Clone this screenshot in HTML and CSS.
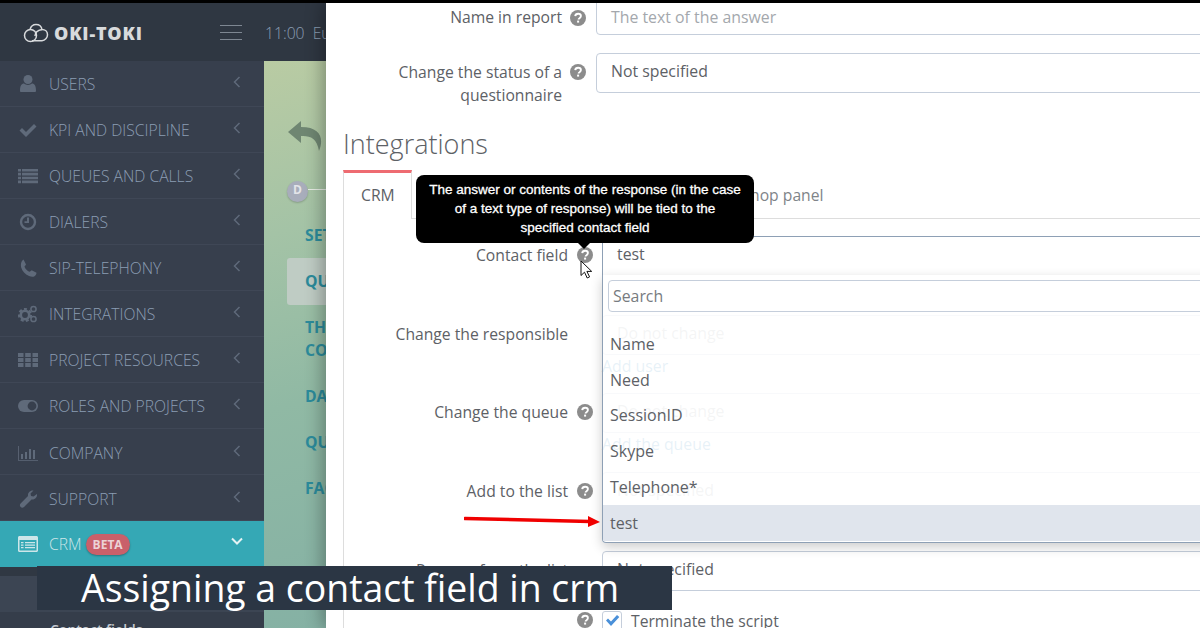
FILE: index.html
```html
<!DOCTYPE html>
<html lang="en">
<head>
    <meta charset="UTF-8">
    <title>Oki-Toki</title>
    <link rel="stylesheet" href="styles.css">
</head>
<body>
    <svg class="defs" width="0" height="0">
        <symbol id="help" viewBox="0 0 16 16">
            <circle cx="8" cy="8" r="8" fill="#8c8c8c"/>
            <path d="M5.200 6.200c.2-1.600 1.400-2.400 2.900-2.400 1.600 0 2.800.9 2.800 2.300 0 1.100-.7 1.600-1.400 2.100-.6.4-.9.700-.9 1.300" fill="none" stroke="#fff" stroke-width="1.900"/>
            <rect x="7.100" y="10.600" width="2" height="2" fill="#fff"/>
        </symbol>
    </svg>

    <aside class="sidebar">
        <div class="logo">
            <svg class="logo-icon" width="26" height="20" viewBox="0 0 26 20" fill="none" stroke="#d8dadc" stroke-width="1.500">
                <circle cx="7.500" cy="12.500" r="6"/>
                <path d="M7 6.500C8 3 10.500 1.500 13 1.500c3 0 5.500 2 6 5 3 0 5.500 2 5.500 5.200 0 3-2.500 6-5.500 6H9"/>
                <path d="M12 13c0-3 2-5.500 7-6.500"/>
            </svg>
            <span class="logo-text">OKI-TOKI</span>
            <svg class="burger" width="22" height="16" viewBox="0 0 22 16"><path d="M0 .5h22M0 7.500h22M0 14.500h22" stroke="#7e8792"/></svg>
        </div>
        <ul class="menu">
            <li class="menu-item">
                <svg class="menu-icon" viewBox="0 0 20 20"><circle cx="10" cy="5.500" r="4.500"/><path d="M3 18c-.8 0-1-.6-1-1.500C2 12 3.500 9.500 6 9.500c1 .9 2.400 1.400 4 1.400s3-.5 4-1.400c2.500 0 4 2.500 4 7 0 .9-.2 1.500-1 1.500z"/></svg>
                <span class="menu-label">USERS</span>
                <svg class="chevron" viewBox="0 0 8 12"><path d="M6.500 1 1.500 6l5 5"/></svg>
            </li>
            <li class="menu-item">
                <svg class="menu-icon" viewBox="0 0 20 20"><path d="M1.500 10.500 4 8l4 4 8-8 2.500 2.500L8 17z"/></svg>
                <span class="menu-label">KPI AND DISCIPLINE</span>
                <svg class="chevron" viewBox="0 0 8 12"><path d="M6.500 1 1.500 6l5 5"/></svg>
            </li>
            <li class="menu-item">
                <svg class="menu-icon" viewBox="0 0 20 20"><path d="M0 3h3v2.500H0zM4 3h16v2.500H4zM0 6.800h3v2.600H0zM4 6.800h16v2.600H4zM0 10.700h3v2.600H0zM4 10.700h16v2.600H4zM0 14.600h3v2.600H0zM4 14.600h16v2.600H4z"/></svg>
                <span class="menu-label">QUEUES AND CALLS</span>
                <svg class="chevron" viewBox="0 0 8 12"><path d="M6.500 1 1.500 6l5 5"/></svg>
            </li>
            <li class="menu-item">
                <svg class="menu-icon" viewBox="0 0 20 20"><circle cx="10" cy="10" r="7" fill="none" stroke="#5f6a7a" stroke-width="2.400"/><path d="M9 5.500h2V11H6.500V9.300H9z"/></svg>
                <span class="menu-label">DIALERS</span>
                <svg class="chevron" viewBox="0 0 8 12"><path d="M6.500 1 1.500 6l5 5"/></svg>
            </li>
            <li class="menu-item">
                <svg class="menu-icon" viewBox="0 0 20 20"><path d="M5.500 1.500 8 6.500c-.5 1-1.500 1.400-1.500 2.300 1 2.500 2.700 4 5 5 1-.2 1.300-1.200 2.200-1.600l4.800 2.500c0 1.500-.8 2.800-2 3.500-1.500.8-3.500.6-5.500-.3-4-1.700-6.600-4.700-7.800-8.400C2.600 6.500 3 3 5.500 1.500z"/></svg>
                <span class="menu-label">SIP-TELEPHONY</span>
                <svg class="chevron" viewBox="0 0 8 12"><path d="M6.500 1 1.500 6l5 5"/></svg>
            </li>
            <li class="menu-item">
                <svg class="menu-icon" viewBox="0 0 20 20">
                    <circle cx="7" cy="11" r="4.200" fill="none" stroke="#5f6a7a" stroke-width="2.600"/>
                    <circle cx="7" cy="11" r="6" fill="none" stroke="#5f6a7a" stroke-width="2.200" stroke-dasharray="3 2.300"/>
                    <circle cx="15.500" cy="5" r="2.600" fill="none" stroke="#5f6a7a" stroke-width="1.500"/>
                    <circle cx="15.500" cy="15" r="2.600" fill="none" stroke="#5f6a7a" stroke-width="1.500"/>
                </svg>
                <span class="menu-label">INTEGRATIONS</span>
                <svg class="chevron" viewBox="0 0 8 12"><path d="M6.500 1 1.500 6l5 5"/></svg>
            </li>
            <li class="menu-item">
                <svg class="menu-icon" viewBox="0 0 20 20"><path d="M0 3h5.500v4H0zM7.200 3h5.600v4H7.200zM14.500 3H20v4h-5.500zM0 8h5.500v4H0zM7.200 8h5.600v4H7.200zM14.500 8H20v4h-5.500zM0 13h5.500v4H0zM7.200 13h5.600v4H7.200zM14.500 13H20v4h-5.500z"/></svg>
                <span class="menu-label">PROJECT RESOURCES</span>
                <svg class="chevron" viewBox="0 0 8 12"><path d="M6.500 1 1.500 6l5 5"/></svg>
            </li>
            <li class="menu-item">
                <svg class="menu-icon" viewBox="0 0 20 20"><rect x="0" y="4" width="20" height="12" rx="6"/><circle cx="14" cy="10" r="4.400" fill="#373f4d"/></svg>
                <span class="menu-label">ROLES AND PROJECTS</span>
                <svg class="chevron" viewBox="0 0 8 12"><path d="M6.500 1 1.500 6l5 5"/></svg>
            </li>
            <li class="menu-item low">
                <svg class="menu-icon" viewBox="0 0 20 20"><path d="M0 3h.8v14H20v.8H0zM3 11h2v5H3zM7 9h2v7H7zM11 6h2v10h-2zM15 7h2v9h-2z"/></svg>
                <span class="menu-label">COMPANY</span>
                <svg class="chevron" viewBox="0 0 8 12"><path d="M6.500 1 1.500 6l5 5"/></svg>
            </li>
            <li class="menu-item low">
                <svg class="menu-icon" viewBox="0 0 20 20"><path d="M19 5c.5 3-2 6-5.500 5.500L6 18c-1 1-2.500 1-3.400 0-1-1-1-2.400 0-3.400L10 7c-.5-3.500 2.500-6 5.500-5.500l-3 3 .5 2.500 2.500.5z"/></svg>
                <span class="menu-label">SUPPORT</span>
                <svg class="chevron" viewBox="0 0 8 12"><path d="M6.500 1 1.500 6l5 5"/></svg>
            </li>
            <li class="menu-item active">
                <svg class="menu-icon" viewBox="0 0 20 20"><path fill-rule="evenodd" d="M1.500 2h17c.8 0 1.500.7 1.500 1.500v13c0 .8-.7 1.500-1.500 1.500h-17C.7 18 0 17.300 0 16.500v-13C0 2.700.7 2 1.500 2zM1.500 6v10.500h17V6zM3 8h2.500v1.300H3zM7 8h10v1.300H7zM3 10.500h2.500v1.300H3zM7 10.500h10v1.300H7zM3 13h2.500v1.300H3zM7 13h10v1.300H7z"/></svg>
                <span class="menu-label">CRM</span>
                <span class="badge">BETA</span>
                <svg class="chevron down" viewBox="0 0 12 8"><path d="M1 1.500 6 6.500l5-5"/></svg>
            </li>
        </ul>
        <div class="submenu">
            <div class="submenu-current"></div>
            <div class="submenu-item">Contact fields</div>
        </div>
    </aside>

    <main class="content">
        <header class="topbar">
            <span class="clock">11:00 &nbsp;Europe</span>
        </header>
        <div class="page">
            <svg class="back" width="36" height="32" viewBox="0 0 36 32"><path d="M14 1 1 12l13 11v-7c9-.5 16 2 18 15 5-12 2-24-18-24z" fill="#6f8672"/></svg>
            <div class="steps">
                <span class="step">D</span>
                <span class="step-line"></span>
            </div>
            <div class="side-title">SETTINGS</div>
            <div class="side-btn">QUESTIONS</div>
            <div class="side-title tall">THE CONTACT<br>CONTACT</div>
            <div class="side-title">DATA</div>
            <div class="side-title">QUEUES</div>
            <div class="side-title">FAQ</div>
        </div>
    </main>

    <section class="modal">
        <div class="row top-row first">
            <label class="row-label">Name in report</label>
            <svg class="help"><use href="#help"/></svg>
            <div class="field placeholder">The text of the answer</div>
        </div>
        <div class="row top-row">
            <label class="row-label">Change the status of a questionnaire</label>
            <svg class="help"><use href="#help"/></svg>
            <div class="field">Not specified</div>
        </div>

        <h2 class="section-title">Integrations</h2>

        <div class="tabs">
            <div class="tab active">CRM</div>
            <div class="tab spacer"></div>
            <div class="tab">Workshop panel</div>
        </div>

        <div class="pane">
            <div class="row pane-row contact">
                <label class="row-label">Contact field</label>
                <svg class="help"><use href="#help"/></svg>
                <div class="field open">test</div>

                <div class="tooltip">The answer or contents of the response (in the case of a text type of response) will be tied to the specified contact field</div>
                <svg class="cursor" width="15" height="19" viewBox="0 0 15 19"><path d="M1 1v14.500l3.500-3.300 2.700 5.800 2.400-1.100-2.700-5.500h4.800z" fill="#fff" stroke="#111" stroke-width="1"/></svg>

                <div class="dropdown">
                    <input class="search" type="text" placeholder="Search">
                    <ul class="options">
                        <li class="option clipped">Company</li>
                        <li class="option">Name</li>
                        <li class="option">Need</li>
                        <li class="option">SessionID</li>
                        <li class="option">Skype</li>
                        <li class="option">Telephone*</li>
                        <li class="option selected">test</li>
                    </ul>
                </div>
            </div>
            <div class="row pane-row">
                <label class="row-label">Change the responsible</label>
                <span></span>
                <div class="field placeholder">Do not change</div>
                <a class="add-link">Add user</a>
            </div>
            <div class="row pane-row">
                <label class="row-label">Change the queue</label>
                <svg class="help"><use href="#help"/></svg>
                <div class="field placeholder">Do not change</div>
                <a class="add-link">Add the queue</a>
            </div>
            <div class="row pane-row">
                <label class="row-label">Add to the list</label>
                <svg class="help"><use href="#help"/></svg>
                <div class="field placeholder">Not specified</div>
            </div>
            <div class="row pane-row short">
                <label class="row-label">Remove from the list</label>
                <span></span>
                <div class="field">Not specified</div>
            </div>
            <div class="row pane-row check">
                <span></span>
                <svg class="help"><use href="#help"/></svg>
                <div class="check-row">
                    <span class="checkbox">
                        <svg width="15" height="13" viewBox="0 0 15 13"><path d="M1 6.500 3 4.500l3 3L12 1l2.300 2L6 12z" fill="#4a90d9"/></svg>
                    </span>
                    Terminate the script
                </div>
            </div>
        </div>
    </section>

    <svg class="red-arrow" width="140" height="14" viewBox="0 0 140 14">
        <path d="M1 3.500 126 6.500" stroke="#f00000" stroke-width="3.500" stroke-linecap="round"/>
        <path d="M124 1l12 6-12 5z" fill="#f00000"/>
    </svg>

    <div class="caption">Assigning a contact field in crm</div>
</body>
</html>
```

FILE: styles.css
```css
* {
    box-sizing: border-box;
}
html, body {
    margin: 0;
    height: 628px;
    overflow: hidden;
}
body {
    display: flex;
    position: relative;
    padding-top: 3px;
    background: #000;
    font-family: "Open Sans", sans-serif;
    font-size: 15.7px;
    color: #5d6166;
}
.defs {
    position: absolute;
}

/* sidebar */
.sidebar {
    flex: none;
    width: 264px;
    background: #373f4d;
}
.logo {
    display: flex;
    align-items: center;
    height: 58px;
    padding: 2px 22px 0 23px;
    background: #2f3742;
}
.logo-icon {
    margin-right: 5px;
}
.logo-text {
    font-weight: 800;
    font-size: 18px;
    letter-spacing: 0.8px;
    color: #d8dadc;
}
.burger {
    margin-left: auto;
}
.menu {
    list-style: none;
    margin: 0;
    padding: 0;
}
.menu-item {
    display: flex;
    align-items: center;
    height: 46px;
    padding-left: 18px;
    border-bottom: 1px solid #3f4756;
    font-weight: 300;
    color: #8b9db3;
}
.menu-item.low {
    padding-top: 2px;
}
.menu-icon {
    flex: none;
    width: 20px;
    height: 20px;
    margin-right: 11px;
    fill: #5f6a7a;
}
.chevron {
    width: 8px;
    height: 12px;
    margin-left: auto;
    margin-right: 23px;
    margin-top: -3px;
    fill: none;
    stroke: #5f6a7a;
    stroke-width: 1.5;
}
.menu-item.active {
    border-bottom: 0;
    background: #35a8b5;
    color: #cfe6e8;
}
.active .menu-icon {
    fill: #cde6e9;
}
.chevron.down {
    width: 12px;
    height: 8px;
    margin-right: 21px;
    margin-top: -6px;
    stroke: #e4f2f3;
    stroke-width: 2;
}
.badge {
    margin-left: 4px;
    padding: 0 7px;
    height: 21px;
    line-height: 22px;
    border-radius: 11px;
    background: #c9606a;
    box-shadow: 0 1px 2px rgba(0, 0, 0, 0.3);
    font-size: 12px;
    font-weight: 700;
    color: #ecd3d6;
}
.submenu {
    padding-top: 9px;
    background: #303843;
}
.submenu-current {
    height: 36px;
    background: #3c4553;
}
.submenu-item {
    padding: 8px 0 0 50px;
    height: 20px;
    background: #353d4a;
    font-size: 14px;
    font-weight: 600;
    color: #c4c9d0;
}

/* page behind the modal */
.content {
    flex: none;
    width: 62px;
    overflow: hidden;
}
.topbar {
    display: flex;
    width: 200px;
    height: 58px;
    align-items: center;
    padding: 2px 0 0 1px;
    background: #2f3742;
    white-space: nowrap;
}
.clock {
    color: #8b9db3;
    font-weight: 300;
}
.page {
    height: 567px;
    padding: 59px 0 0 23px;
    background: linear-gradient(165deg, #b9cba3 0%, #a4c3a6 30%, #90b9a4 60%, #85b1a4 100%);
    white-space: nowrap;
}
.back {
    display: block;
}
.steps {
    display: flex;
    align-items: center;
    margin-top: 29px;
}
.step {
    flex: none;
    width: 21px;
    height: 21px;
    line-height: 17px;
    border-radius: 50%;
    background: #a8adbb;
    box-shadow: 0 1px 2px rgba(0, 0, 0, 0.2);
    text-align: center;
    font-size: 12px;
    font-weight: 700;
    color: #e3e4e8;
}
.step-line {
    flex: none;
    width: 40px;
    height: 1px;
    margin-top: -4px;
    background: #e6ece4;
}
.side-title {
    margin: 22px 0 0 18px;
    font-weight: 700;
    line-height: 23px;
    color: #2c8b9b;
}
.side-title.tall {
    margin-top: 11px;
}
.side-btn {
    width: 200px;
    height: 47px;
    margin-top: 11px;
    padding: 12px 0 0 18px;
    border-radius: 3px;
    background: #bfccc4;
    font-weight: 700;
    color: #2c8b9b;
}
.side-title + .side-title:not(.tall) {
    margin-top: 23px;
}

/* modal */
.modal {
    flex: none;
    width: 920px;
    height: 625px;
    overflow: hidden;
    padding-left: 17px;
    background: #fff;
    box-shadow: -4px 0 16px rgba(0, 0, 0, 0.3);
    z-index: 2;
}
.row {
    display: grid;
    position: relative;
    align-content: start;
}
.top-row {
    grid-template-columns: 219px 34px 1fr;
    margin-top: 18px;
}
.top-row.first {
    margin-top: -8px;
}
.first .row-label {
    padding-top: 11px;
}
.first .field {
    padding-top: 10px;
}
.first .help {
    margin-top: 15px;
}
.row-label {
    padding-top: 8px;
    text-align: right;
    line-height: 23px;
}
.help {
    width: 16px;
    height: 16px;
    margin: 11px 0 0 8px;
}
.pane-row .help {
    margin-left: 9px;
}
.field {
    height: 40px;
    padding: 6px 14px;
    border: 1px solid #c5cedb;
    border-radius: 4px;
    line-height: 23px;
    font-size: 15.85px;
    background: #fff;
}
.placeholder {
    color: #a4a8ad;
}
.section-title {
    margin: 17px 0 6px;
    font-size: 27px;
    font-weight: 300;
    line-height: 40px;
    color: #5d6166;
}

/* tabs */
.tabs {
    display: flex;
    height: 49px;
    border-bottom: 1px solid #ddd;
}
.tab {
    padding: 14px 0 0 18px;
    line-height: 23px;
    color: #808489;
}
.tab.active {
    width: 69px;
    height: 49px;
    border: 1px solid #ddd;
    border-top: 3px solid #ee6b71;
    border-bottom: 0;
    background: #fff;
    color: #5d6166;
    padding-top: 11px;
    padding-left: 17px;
}
.tab.spacer {
    width: 274px;
}

/* tab pane */
.pane {
    padding-top: 17px;
    border-left: 1px solid #ddd;
}
.pane-row {
    grid-template-columns: 224px 34px 1fr;
    height: 78.67px;
}
.pane-row.short {
    height: 60px;
}
.add-link {
    grid-column: 3;
    line-height: 23px;
    font-size: 15.85px;
    color: #3c8dbc;
}
.field.open {
    border-color: #8ea0b5;
    border-radius: 4px 4px 0 0;
    border-bottom: 0;
}
.check .help {
    margin-top: 1px;
}
.check-row {
    display: flex;
    align-items: center;
    gap: 9px;
    height: 20px;
    white-space: nowrap;
}
.checkbox {
    display: flex;
    align-items: center;
    justify-content: center;
    width: 20px;
    height: 20px;
    border: 1px solid #c5cedb;
    border-radius: 3px;
}

/* things lying over the form */
.dropdown {
    position: absolute;
    left: 258px;
    right: 0;
    top: 39px;
    height: 268px;
    padding-top: 5px;
    border: 1px solid #8ea0b5;
    border-top: 0;
    border-radius: 0 0 4px 4px;
    background: rgba(255, 255, 255, 0.88);
    box-shadow: 0 4px 12px rgba(0, 0, 0, 0.2);
    z-index: 3;
}
.search {
    display: block;
    width: calc(100% - 10px);
    height: 32px;
    margin-left: 5px;
    padding: 0 4px;
    border: 1px solid #c5cedb;
    border-radius: 4px;
    font-family: "Open Sans", sans-serif;
    font-size: 15.85px;
    color: #5d6166;
}
.search::placeholder {
    color: #777b80;
    opacity: 1;
}
.options {
    list-style: none;
    height: 226px;
    margin: 4px 0 0;
    padding: 0;
    overflow: hidden;
}
.option {
    height: 35.8px;
    padding: 7px 0 0 7px;
    line-height: 23px;
    font-size: 16px;
}
.option.clipped {
    margin-top: -28px;
    margin-bottom: 2px;
}
.option.selected {
    background: #e0e5ed;
}
.tooltip {
    position: absolute;
    left: 72px;
    top: -61px;
    width: 338px;
    height: 68px;
    padding: 5px 13px;
    border-radius: 8px;
    background: #000;
    text-align: center;
    font-family: "Liberation Sans", Arial, sans-serif;
    font-size: 13.5px;
    line-height: 19px;
    -webkit-text-stroke: 0.3px #fff;
    color: #fff;
    z-index: 4;
}
.tooltip::after {
    content: "";
    position: absolute;
    left: 161px;
    bottom: -6px;
    border: 7px solid transparent;
    border-top-color: #000;
    border-bottom: 0;
}
.cursor {
    position: absolute;
    left: 236px;
    top: 24px;
    z-index: 5;
}
.red-arrow {
    position: absolute;
    left: 464px;
    top: 515px;
    z-index: 6;
}
.caption {
    position: absolute;
    left: 37px;
    top: 566px;
    width: 635px;
    height: 44px;
    padding-left: 44px;
    background: #2b3644;
    font-size: 37.4px;
    line-height: 44px;
    white-space: nowrap;
    color: #fff;
    z-index: 7;
}
```
